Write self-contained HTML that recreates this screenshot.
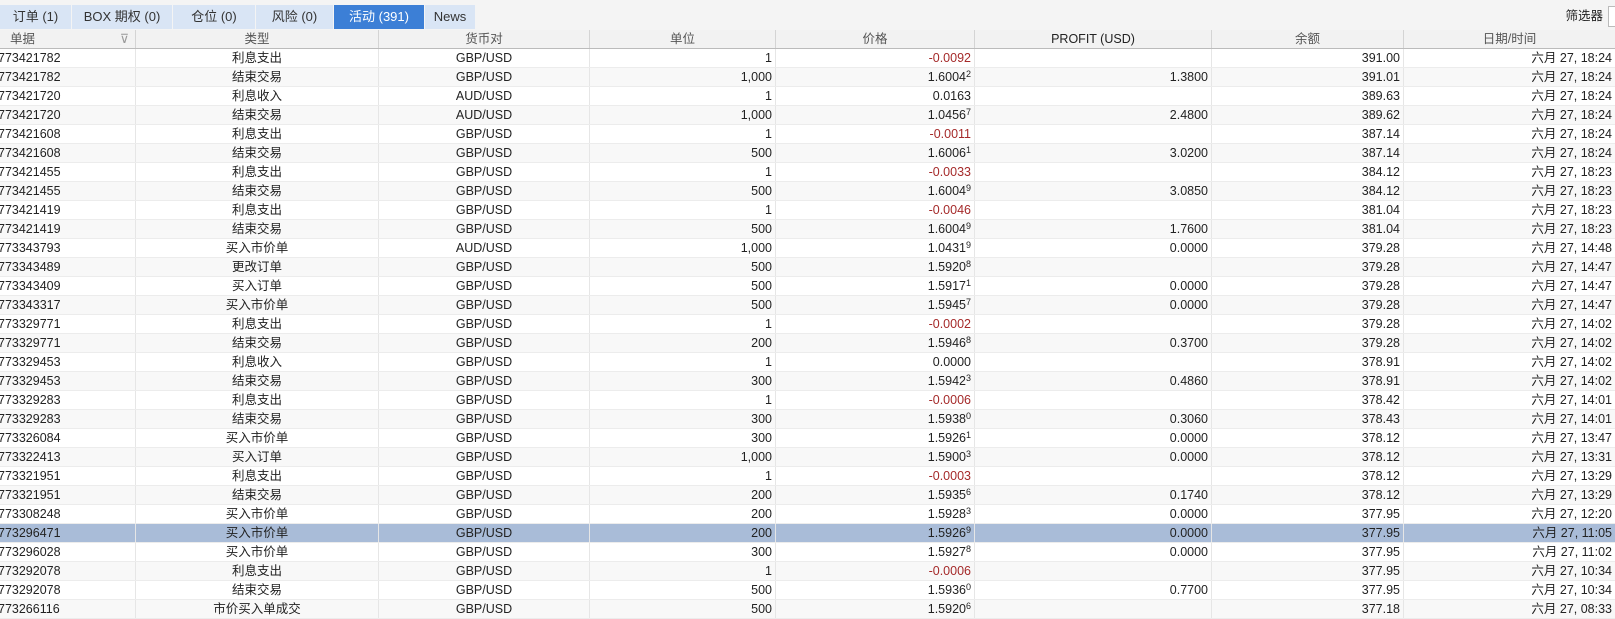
<!DOCTYPE html>
<html><head><meta charset="utf-8"><style>
*{margin:0;padding:0;box-sizing:border-box}
body{width:1615px;height:617px;overflow:hidden;background:#f4f4f4;font-family:"Liberation Sans","Noto Sans CJK SC",sans-serif;font-size:12.5px;color:#222;position:relative}
.tabs{position:absolute;top:5px;left:0;height:24px;display:flex}
.tab{height:24px;line-height:24px;background:#d9e5f5;color:#333;text-align:center;margin-right:1px;font-size:13px}
.tab.on{background:#3c7fd6;color:#fff}
.filter{position:absolute;right:12px;top:8px;font-size:12.5px;line-height:16px}
.filter:after{content:"";position:absolute;right:-12px;top:-2px;width:6px;height:19px;border:1px solid #bbb;border-right:none;background:#fff}
.grid{position:absolute;top:30px;left:0;width:1615px}
.row{display:flex;height:19px;background:#fff;border-bottom:1px solid #ececec}
.row:nth-child(odd){background:#f8f8f8}
.row.h{background:#f2f2f2;border-bottom:1px solid #bbb;color:#555}
.row.sel{background:#a9bcd8}
.row>div{height:18px;line-height:18px;overflow:hidden;white-space:nowrap;border-right:1px solid #e6e6e6;padding:0 3px;flex:none}
.row.h>div{border-right:1px solid #d4d4d4;text-align:center;padding:0}
.row>div:nth-child(1){width:136px;text-align:left;padding-left:0;text-indent:-2px}
.row>div:nth-child(2){width:243px;text-align:center}
.row>div:nth-child(3){width:211px;text-align:center}
.row>div:nth-child(4){width:186px;text-align:right}
.row>div:nth-child(5){width:199px;text-align:right}
.row>div:nth-child(6){width:237px;text-align:right}
.row>div:nth-child(7){width:192px;text-align:right}
.row>div:nth-child(8){width:211px;text-align:right;border-right:none}
.row.h>div:nth-child(1){text-align:left;padding-left:10px;text-indent:0}
.n{color:#a52a2a}
sup{font-size:9px;vertical-align:4px;line-height:0}
</style></head><body>
<div class="tabs">
<div class="tab" style="width:71px">订单 (1)</div>
<div class="tab" style="width:100px">BOX 期权 (0)</div>
<div class="tab" style="width:82px">仓位 (0)</div>
<div class="tab" style="width:77px">风险 (0)</div>
<div class="tab on" style="width:90px">活动 (391)</div>
<div class="tab" style="width:50px">News</div>
</div>
<div class="filter">筛选器</div>
<div class="grid">
<div class="row h"><div>单据<span style="float:right;margin-right:6px;color:#999">⊽</span></div><div>类型</div><div>货币对</div><div style="text-align:center">单位</div><div style="text-align:center">价格</div><div style="text-align:center;color:#222">PROFIT (USD)</div><div style="text-align:center">余额</div><div style="text-align:center">日期/时间</div></div>
<div class="row"><div>773421782</div><div>利息支出</div><div>GBP/USD</div><div>1</div><div class="n">-0.0092</div><div></div><div>391.00</div><div>六月 27, 18:24</div></div>
<div class="row"><div>773421782</div><div>结束交易</div><div>GBP/USD</div><div>1,000</div><div>1.6004<sup>2</sup></div><div>1.3800</div><div>391.01</div><div>六月 27, 18:24</div></div>
<div class="row"><div>773421720</div><div>利息收入</div><div>AUD/USD</div><div>1</div><div>0.0163</div><div></div><div>389.63</div><div>六月 27, 18:24</div></div>
<div class="row"><div>773421720</div><div>结束交易</div><div>AUD/USD</div><div>1,000</div><div>1.0456<sup>7</sup></div><div>2.4800</div><div>389.62</div><div>六月 27, 18:24</div></div>
<div class="row"><div>773421608</div><div>利息支出</div><div>GBP/USD</div><div>1</div><div class="n">-0.0011</div><div></div><div>387.14</div><div>六月 27, 18:24</div></div>
<div class="row"><div>773421608</div><div>结束交易</div><div>GBP/USD</div><div>500</div><div>1.6006<sup>1</sup></div><div>3.0200</div><div>387.14</div><div>六月 27, 18:24</div></div>
<div class="row"><div>773421455</div><div>利息支出</div><div>GBP/USD</div><div>1</div><div class="n">-0.0033</div><div></div><div>384.12</div><div>六月 27, 18:23</div></div>
<div class="row"><div>773421455</div><div>结束交易</div><div>GBP/USD</div><div>500</div><div>1.6004<sup>9</sup></div><div>3.0850</div><div>384.12</div><div>六月 27, 18:23</div></div>
<div class="row"><div>773421419</div><div>利息支出</div><div>GBP/USD</div><div>1</div><div class="n">-0.0046</div><div></div><div>381.04</div><div>六月 27, 18:23</div></div>
<div class="row"><div>773421419</div><div>结束交易</div><div>GBP/USD</div><div>500</div><div>1.6004<sup>9</sup></div><div>1.7600</div><div>381.04</div><div>六月 27, 18:23</div></div>
<div class="row"><div>773343793</div><div>买入市价单</div><div>AUD/USD</div><div>1,000</div><div>1.0431<sup>9</sup></div><div>0.0000</div><div>379.28</div><div>六月 27, 14:48</div></div>
<div class="row"><div>773343489</div><div>更改订单</div><div>GBP/USD</div><div>500</div><div>1.5920<sup>8</sup></div><div></div><div>379.28</div><div>六月 27, 14:47</div></div>
<div class="row"><div>773343409</div><div>买入订单</div><div>GBP/USD</div><div>500</div><div>1.5917<sup>1</sup></div><div>0.0000</div><div>379.28</div><div>六月 27, 14:47</div></div>
<div class="row"><div>773343317</div><div>买入市价单</div><div>GBP/USD</div><div>500</div><div>1.5945<sup>7</sup></div><div>0.0000</div><div>379.28</div><div>六月 27, 14:47</div></div>
<div class="row"><div>773329771</div><div>利息支出</div><div>GBP/USD</div><div>1</div><div class="n">-0.0002</div><div></div><div>379.28</div><div>六月 27, 14:02</div></div>
<div class="row"><div>773329771</div><div>结束交易</div><div>GBP/USD</div><div>200</div><div>1.5946<sup>8</sup></div><div>0.3700</div><div>379.28</div><div>六月 27, 14:02</div></div>
<div class="row"><div>773329453</div><div>利息收入</div><div>GBP/USD</div><div>1</div><div>0.0000</div><div></div><div>378.91</div><div>六月 27, 14:02</div></div>
<div class="row"><div>773329453</div><div>结束交易</div><div>GBP/USD</div><div>300</div><div>1.5942<sup>3</sup></div><div>0.4860</div><div>378.91</div><div>六月 27, 14:02</div></div>
<div class="row"><div>773329283</div><div>利息支出</div><div>GBP/USD</div><div>1</div><div class="n">-0.0006</div><div></div><div>378.42</div><div>六月 27, 14:01</div></div>
<div class="row"><div>773329283</div><div>结束交易</div><div>GBP/USD</div><div>300</div><div>1.5938<sup>0</sup></div><div>0.3060</div><div>378.43</div><div>六月 27, 14:01</div></div>
<div class="row"><div>773326084</div><div>买入市价单</div><div>GBP/USD</div><div>300</div><div>1.5926<sup>1</sup></div><div>0.0000</div><div>378.12</div><div>六月 27, 13:47</div></div>
<div class="row"><div>773322413</div><div>买入订单</div><div>GBP/USD</div><div>1,000</div><div>1.5900<sup>3</sup></div><div>0.0000</div><div>378.12</div><div>六月 27, 13:31</div></div>
<div class="row"><div>773321951</div><div>利息支出</div><div>GBP/USD</div><div>1</div><div class="n">-0.0003</div><div></div><div>378.12</div><div>六月 27, 13:29</div></div>
<div class="row"><div>773321951</div><div>结束交易</div><div>GBP/USD</div><div>200</div><div>1.5935<sup>6</sup></div><div>0.1740</div><div>378.12</div><div>六月 27, 13:29</div></div>
<div class="row"><div>773308248</div><div>买入市价单</div><div>GBP/USD</div><div>200</div><div>1.5928<sup>3</sup></div><div>0.0000</div><div>377.95</div><div>六月 27, 12:20</div></div>
<div class="row sel"><div>773296471</div><div>买入市价单</div><div>GBP/USD</div><div>200</div><div>1.5926<sup>9</sup></div><div>0.0000</div><div>377.95</div><div>六月 27, 11:05</div></div>
<div class="row"><div>773296028</div><div>买入市价单</div><div>GBP/USD</div><div>300</div><div>1.5927<sup>8</sup></div><div>0.0000</div><div>377.95</div><div>六月 27, 11:02</div></div>
<div class="row"><div>773292078</div><div>利息支出</div><div>GBP/USD</div><div>1</div><div class="n">-0.0006</div><div></div><div>377.95</div><div>六月 27, 10:34</div></div>
<div class="row"><div>773292078</div><div>结束交易</div><div>GBP/USD</div><div>500</div><div>1.5936<sup>0</sup></div><div>0.7700</div><div>377.95</div><div>六月 27, 10:34</div></div>
<div class="row"><div>773266116</div><div>市价买入单成交</div><div>GBP/USD</div><div>500</div><div>1.5920<sup>6</sup></div><div></div><div>377.18</div><div>六月 27, 08:33</div></div>
</div>
</body></html>
